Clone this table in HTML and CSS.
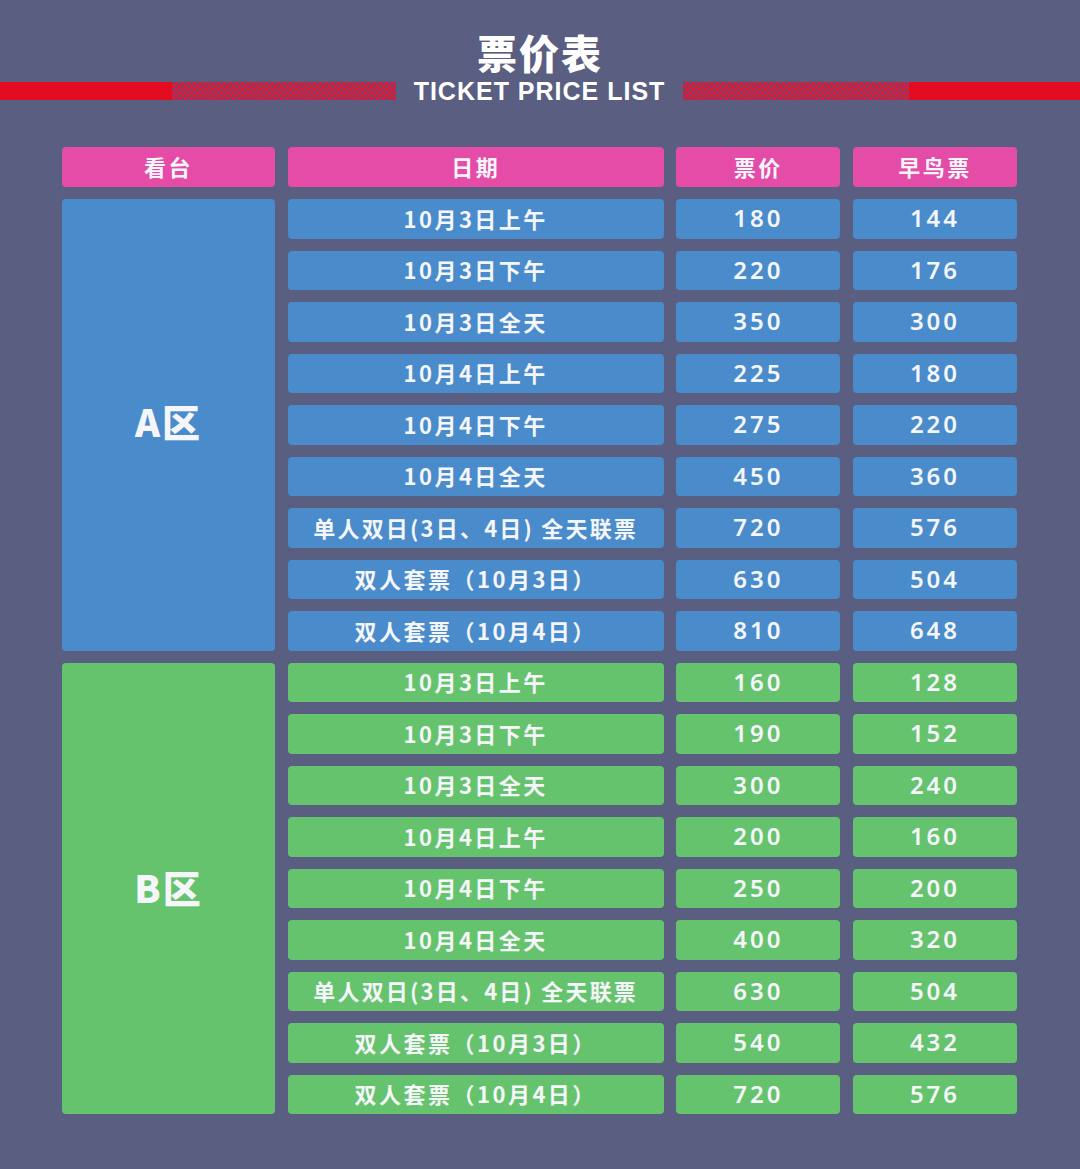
FILE: index.html
```html
<!DOCTYPE html>
<html lang="zh">
<head>
<meta charset="utf-8">
<title>票价表</title>
<link rel="stylesheet" href="styles.css">
</head>
<body>
<div class="page">
  <header class="head">
    <h1 class="title">票价表</h1>
    <div class="sub">
      <span class="bar solid"></span>
      <span class="bar check"></span>
      <span class="subtext">TICKET PRICE LIST</span>
      <span class="bar check"></span>
      <span class="bar solid"></span>
    </div>
  </header>
  <div class="table">
    <div class="cell th">看台</div>
    <div class="cell th">日期</div>
    <div class="cell th">票价</div>
    <div class="cell th">早鸟票</div>

    <div class="cell zone blue za">A区</div>
    <div class="cell blue">10月3日上午</div><div class="cell blue num">180</div><div class="cell blue num">144</div>
    <div class="cell blue">10月3日下午</div><div class="cell blue num">220</div><div class="cell blue num">176</div>
    <div class="cell blue">10月3日全天</div><div class="cell blue num">350</div><div class="cell blue num">300</div>
    <div class="cell blue">10月4日上午</div><div class="cell blue num">225</div><div class="cell blue num">180</div>
    <div class="cell blue">10月4日下午</div><div class="cell blue num">275</div><div class="cell blue num">220</div>
    <div class="cell blue">10月4日全天</div><div class="cell blue num">450</div><div class="cell blue num">360</div>
    <div class="cell blue tight">单人双日(3日、4日) 全天联票</div><div class="cell blue num">720</div><div class="cell blue num">576</div>
    <div class="cell blue">双人套票（10月3日）</div><div class="cell blue num">630</div><div class="cell blue num">504</div>
    <div class="cell blue">双人套票（10月4日）</div><div class="cell blue num">810</div><div class="cell blue num">648</div>

    <div class="cell zone green zb">B区</div>
    <div class="cell green">10月3日上午</div><div class="cell green num">160</div><div class="cell green num">128</div>
    <div class="cell green">10月3日下午</div><div class="cell green num">190</div><div class="cell green num">152</div>
    <div class="cell green">10月3日全天</div><div class="cell green num">300</div><div class="cell green num">240</div>
    <div class="cell green">10月4日上午</div><div class="cell green num">200</div><div class="cell green num">160</div>
    <div class="cell green">10月4日下午</div><div class="cell green num">250</div><div class="cell green num">200</div>
    <div class="cell green">10月4日全天</div><div class="cell green num">400</div><div class="cell green num">320</div>
    <div class="cell green tight">单人双日(3日、4日) 全天联票</div><div class="cell green num">630</div><div class="cell green num">504</div>
    <div class="cell green">双人套票（10月3日）</div><div class="cell green num">540</div><div class="cell green num">432</div>
    <div class="cell green">双人套票（10月4日）</div><div class="cell green num">720</div><div class="cell green num">576</div>
  </div>
</div>
</body>
</html>
```

FILE: styles.css
```css
html, body {
  margin: 0;
  padding: 0;
  background: #5a5e81;
}
.page {
  width: 1080px;
  height: 1169px;
  background: #5a5e81;
  font-family: "Noto Sans CJK SC", "Noto Sans", sans-serif;
  color: #f4f6fa;
  padding-top: 32px;
  box-sizing: border-box;
  overflow: hidden;
}
.head {
  display: flex;
  flex-direction: column;
  align-items: stretch;
}
.title {
  margin: 0;
  text-align: center;
  font-size: 40px;
  line-height: 40px;
  font-weight: 900;
  letter-spacing: 2px;
  color: #ffffff;
}
.sub {
  display: grid;
  grid-template-columns: 172px 224px 287px 226px 171px;
  align-items: center;
  height: 24px;
  margin-top: 7px;
}
.bar {
  height: 18px;
  display: block;
}
.solid {
  background: #e30b1f;
}
.check {
  background-color: #b3294a;
  background-image: repeating-conic-gradient(#e01a32 0 25%, #8a3a64 0 50%);
  background-size: 6px 6px;
}
.subtext {
  text-align: center;
  font-family: "Liberation Sans", Arial, sans-serif;
  font-weight: 700;
  font-size: 25px;
  line-height: 24px;
  letter-spacing: 1px;
  color: #ffffff;
}
.table {
  display: grid;
  grid-template-columns: 213px 376px 164px 164px;
  grid-template-rows: 40px repeat(18, 39.5px);
  column-gap: 12.67px;
  row-gap: 12px;
  margin: 44px 0 0 62px;
}
.cell {
  display: flex;
  align-items: center;
  justify-content: center;
  border-radius: 4px;
  font-size: 22px;
  font-weight: 700;
  letter-spacing: 2.5px;
  white-space: nowrap;
  padding-bottom: 2px;
  box-sizing: border-box;
}
.th {
  background: #e44ca7;
}
.blue {
  background: #4a8bcb;
}
.green {
  background: #66c36d;
}
.num {
  font-family: "Noto Sans", sans-serif;
  font-size: 24px;
  font-weight: 600;
  letter-spacing: 3px;
}
.tight {
  letter-spacing: 2.2px;
}
.zone {
  font-size: 38px;
  font-weight: 900;
  letter-spacing: 2px;
  padding-bottom: 8px;
}
.za {
  grid-column: 1;
  grid-row: 2 / span 9;
}
.zb {
  grid-column: 1;
  grid-row: 11 / span 9;
  padding-bottom: 4px;
}
```
